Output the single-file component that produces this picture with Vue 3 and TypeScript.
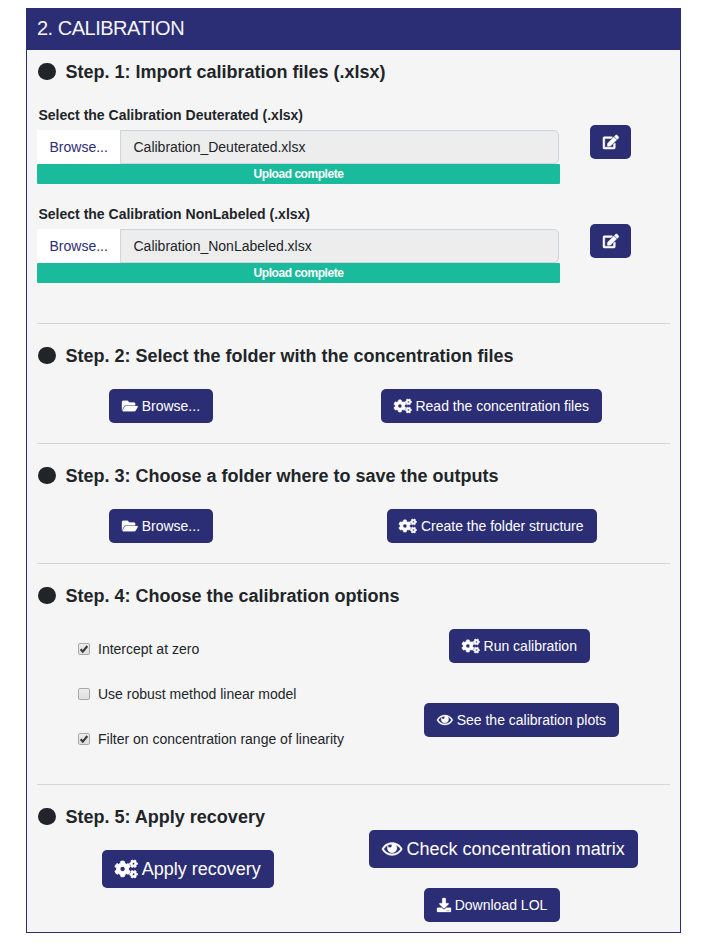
<script setup lang="ts">
import { ref, h, type FunctionalComponent } from 'vue'

type IconName = 'edit' | 'folder' | 'cogs' | 'eye' | 'download'

const smallCog =
  'M512.1 191l-8.2 14.3c-3 5.3-9.4 7.5-15.1 5.4-11.8-4.4-22.6-10.7-32.1-18.6-4.6-3.8-5.8-10.5-2.8-15.7l8.2-14.3c-6.9-8-12.3-17.3-15.9-27.4h-16.5c-6 0-11.2-4.3-12.2-10.3-2-12-2.1-24.6 0-37.1 1-6 6.2-10.4 12.2-10.4h16.5c3.6-10.1 9-19.4 15.9-27.4l-8.2-14.3c-3-5.2-1.9-11.9 2.8-15.7 9.5-7.9 20.4-14.2 32.1-18.6 5.7-2.1 12.1.1 15.1 5.4l8.2 14.3c10.5-1.9 21.2-1.9 31.7 0L552 6.3c3-5.3 9.4-7.5 15.1-5.4 11.8 4.4 22.6 10.7 32.1 18.6 4.6 3.8 5.8 10.5 2.8 15.7l-8.2 14.3c6.9 8 12.3 17.3 15.9 27.4h16.5c6 0 11.2 4.3 12.2 10.3 2 12 2.1 24.6 0 37.1-1 6-6.2 10.4-12.2 10.4h-16.5c-3.6 10.1-9 19.4-15.9 27.4l8.2 14.3c3 5.2 1.9 11.9-2.8 15.7-9.5 7.9-20.4 14.2-32.1 18.6-5.7 2.1-12.1-.1-15.1-5.4l-8.2-14.3c-10.4 1.9-21.2 1.9-31.7 0zm-10.5-58.8c38.5 29.6 82.4-14.3 52.8-52.8-38.5-29.7-82.4 14.3-52.8 52.8z'
const largeCog =
  'M386.3 286.1l33.7 16.8c10.1 5.8 14.5 18.1 10.5 29.1-8.9 24.2-26.4 46.4-42.6 65.8-7.4 8.9-20.2 11.1-30.3 5.3l-29.1-16.8c-16 13.7-34.6 24.6-54.9 31.7v33.6c0 11.6-8.3 21.6-19.7 23.6-24.6 4.2-50.4 4.4-75.9 0-11.5-2-20-11.9-20-23.6V418c-20.3-7.2-38.9-18-54.9-31.7L74 403c-10 5.8-22.9 3.6-30.3-5.3-16.2-19.4-33.3-41.6-42.2-65.7-4-10.9.4-23.2 10.5-29.1l33.3-16.8c-3.9-20.9-3.9-42.4 0-63.4L12 205.8c-10.1-5.8-14.6-18.1-10.5-29 8.9-24.2 26-46.4 42.2-65.8 7.4-8.9 20.2-11.1 30.3-5.3l29.1 16.8c16-13.7 34.6-24.6 54.9-31.7V57.1c0-11.5 8.2-21.5 19.6-23.5 24.6-4.2 50.5-4.4 76-.1 11.5 2 20 11.9 20 23.6v33.6c20.3 7.2 38.9 18 54.9 31.7l29.1-16.8c10-5.8 22.9-3.6 30.3 5.3 16.2 19.4 33.2 41.6 42.1 65.8 4 10.9.1 23.2-10 29.1l-33.7 16.8c3.9 21 3.9 42.5 0 63.5zm-117.6 21.1c59.2-77-28.7-164.9-105.7-105.7-59.2 77 28.7 164.9 105.7 105.7z'

const icons: Record<IconName, { width: number; stroke: number; paths: { d: string; shift?: number }[] }> = {
  edit: {
    width: 576,
    stroke: 18,
    paths: [{ d: 'M402.6 83.2l90.2 90.2c3.8 3.8 3.8 10 0 13.8L274.4 405.6l-92.8 10.3c-12.4 1.4-22.9-9.1-21.5-21.5l10.3-92.8L388.8 83.2c3.8-3.8 10-3.8 13.8 0zm162-22.9l-48.8-48.8c-15.2-15.2-39.9-15.2-55.2 0l-35.4 35.4c-3.8 3.8-3.8 10 0 13.8l90.2 90.2c3.8 3.8 10 3.8 13.8 0l35.4-35.4c15.2-15.3 15.2-40 0-55.2zM384 346.2V448H64V128h229.8c3.2 0 6.2-1.3 8.5-3.5l40-40c7.6-7.6 2.2-20.5-8.5-20.5H48C21.5 64 0 85.5 0 112v352c0 26.5 21.5 48 48 48h352c26.5 0 48-21.5 48-48V306.2c0-10.7-12.9-16-20.5-8.5l-40 40c-2.2 2.3-3.5 5.3-3.5 8.5z' }],
  },
  folder: {
    width: 576,
    stroke: 12,
    paths: [{ d: 'M572.694 292.093L500.27 416.248A63.997 63.997 0 0 1 444.989 448H45.025c-18.523 0-30.064-20.093-20.731-36.093l72.424-124.155A64 64 0 0 1 152 256h399.964c18.523 0 30.064 20.093 20.73 36.093zM152 224h328v-48c0-26.51-21.49-48-48-48H272l-64-64H48C21.49 64 0 85.49 0 112v278.046l69.077-118.418C86.214 242.25 117.989 224 152 224z' }],
  },
  cogs: {
    width: 640,
    stroke: 22,
    paths: [{ d: smallCog }, { d: largeCog }, { d: smallCog, shift: 298.9 }],
  },
  eye: {
    width: 576,
    stroke: 10,
    paths: [{ d: 'M569.354 231.631C512.969 135.949 407.81 72 288 72 168.14 72 63.004 135.994 6.646 231.631a47.999 47.999 0 0 0 0 48.739C63.031 376.051 168.19 440 288 440c119.86 0 224.996-63.994 281.354-159.631a47.997 47.997 0 0 0 0-48.738zM288 392c-102.556 0-192.091-54.701-240-136 44.157-74.933 123.677-127.27 216.162-135.007C273.958 131.078 280 144.83 280 160c0 30.928-25.072 56-56 56s-56-25.072-56-56l.001-.042C157.794 179.043 152 200.844 152 224c0 75.111 60.889 136 136 136s136-60.889 136-136c0-31.031-10.4-59.629-27.895-82.515C451.704 164.638 498.009 205.106 528 256c-47.908 81.299-137.444 136-240 136z' }],
  },
  download: {
    width: 512,
    stroke: 10,
    paths: [{ d: 'M216 0h80c13.3 0 24 10.7 24 24v168h87.7c17.8 0 26.7 21.5 14.1 34.1L269.7 378.3c-7.5 7.5-19.8 7.5-27.3 0L90.1 226.1c-12.6-12.6-3.7-34.1 14.1-34.1H192V24c0-13.3 10.7-24 24-24zm296 376v112c0 13.3-10.7 24-24 24H24c-13.3 0-24-10.7-24-24V376c0-13.3 10.7-24 24-24h146.7l49 49c20.1 20.1 52.5 20.1 72.6 0l49-49H488c13.3 0 24 10.7 24 24zm-124 88c0-11-9-20-20-20s-20 9-20 20 9 20 20 20 20-9 20-20zm64 0c0-11-9-20-20-20s-20 9-20 20 9 20 20 20 20-9 20-20z' }],
  },
}

const Icon: FunctionalComponent<{ name: IconName }> = (props) => {
  const icon = icons[props.name]
  return h(
    'svg',
    {
      viewBox: `0 0 ${icon.width} 512`,
      width: `${icon.width / 512}em`,
      height: '1em',
      fill: 'currentColor',
      stroke: 'currentColor',
      'stroke-width': icon.stroke,
      overflow: 'visible',
      'aria-hidden': 'true',
    },
    icon.paths.map((p) => h('path', { d: p.d, transform: p.shift ? `translate(0 ${p.shift})` : undefined })),
  )
}
Icon.props = ['name']

const uploads = [
  { label: 'Select the Calibration Deuterated (.xlsx)', file: 'Calibration_Deuterated.xlsx' },
  { label: 'Select the Calibration NonLabeled (.xlsx)', file: 'Calibration_NonLabeled.xlsx' },
]

const options = ref([
  { label: 'Intercept at zero', checked: true },
  { label: 'Use robust method linear model', checked: false },
  { label: 'Filter on concentration range of linearity', checked: true },
])
</script>

<template>
  <main class="panel">
    <header class="panel-header">2. CALIBRATION</header>

    <section class="step step-import">
      <h2 class="title"><span class="dot"></span>Step. 1: Import calibration files (.xlsx)</h2>
      <div v-for="u in uploads" :key="u.file" class="upload">
        <div class="upload-main">
          <div class="label">{{ u.label }}</div>
          <div class="file-row">
            <button class="file-browse">Browse...</button>
            <div class="file-name">{{ u.file }}</div>
          </div>
          <div class="progress">Upload complete</div>
        </div>
        <button class="btn btn-edit"><Icon name="edit" /></button>
      </div>
    </section>

    <section class="step step-row">
      <h2 class="title"><span class="dot"></span>Step. 2: Select the folder with the concentration files</h2>
      <div class="actions">
        <div class="cell"><button class="btn w-browse"><Icon name="folder" />Browse...</button></div>
        <div class="cell"><button class="btn w-read"><Icon name="cogs" />Read the concentration files</button></div>
      </div>
    </section>

    <section class="step step-row">
      <h2 class="title"><span class="dot"></span>Step. 3: Choose a folder where to save the outputs</h2>
      <div class="actions">
        <div class="cell"><button class="btn w-browse"><Icon name="folder" />Browse...</button></div>
        <div class="cell"><button class="btn w-create"><Icon name="cogs" />Create the folder structure</button></div>
      </div>
    </section>

    <section class="step step-options">
      <h2 class="title"><span class="dot"></span>Step. 4: Choose the calibration options</h2>
      <div class="options-body">
        <div class="options">
          <label v-for="o in options" :key="o.label" class="option">
            <input v-model="o.checked" type="checkbox" class="native" />
            <span class="box">
              <svg v-if="o.checked" viewBox="0 0 12 12" width="12" height="12"><path d="M2.6 6.3 4.8 8.6 9.3 3" fill="none" stroke="#3c3c3c" stroke-width="2.2" /></svg>
            </span>
            <span>{{ o.label }}</span>
          </label>
        </div>
        <div class="run-actions">
          <button class="btn w-run"><Icon name="cogs" />Run calibration</button>
          <button class="btn w-plots"><Icon name="eye" />See the calibration plots</button>
        </div>
      </div>
    </section>

    <section class="step step-recovery">
      <div class="recovery-left">
        <h2 class="title"><span class="dot"></span>Step. 5: Apply recovery</h2>
        <button class="btn btn-lg w-apply"><Icon name="cogs" />Apply recovery</button>
      </div>
      <div class="recovery-right">
        <button class="btn btn-lg w-check"><Icon name="eye" />Check concentration matrix</button>
        <button class="btn w-download"><Icon name="download" />Download LOL</button>
      </div>
    </section>
  </main>
</template>

<style>
body {
  margin: 0;
  background: #fff;
}
</style>

<style scoped>
* {
  box-sizing: border-box;
}
.panel {
  width: 655px;
  height: 925px;
  margin: 8px 0 0 26px;
  border: 1px solid #2c2e75;
  background: #f5f5f5;
  color: #212529;
  font-family: 'Liberation Sans', Arial, sans-serif;
  font-size: 14px;
  line-height: 20px;
  white-space: nowrap;
}
.panel-header {
  height: 41px;
  padding: 0 10px;
  background: #2c2e75;
  color: #f5f5f5;
  font-size: 20px;
  line-height: 39px;
  letter-spacing: -0.5px;
}
.step {
  margin: 0 10px;
  border-bottom: 1px solid #d6d6d6;
}
.step:last-child {
  border-bottom: 0;
}
.title {
  display: flex;
  align-items: center;
  gap: 10px;
  height: 24px;
  margin: 0;
  font-size: 18px;
  line-height: 24px;
  font-weight: 700;
}
.dot {
  width: 17.5px;
  height: 17.5px;
  margin: 0 0 1.5px 1px;
  border-radius: 50%;
  background: #212529;
}
.step-import {
  height: 274px;
  padding-top: 10px;
}
.upload {
  display: flex;
  gap: 30px;
  height: 99px;
  padding-top: 21px;
}
.upload-main {
  width: 523px;
}
.label {
  height: 25px;
  padding-left: 1.5px;
  font-weight: 700;
}
.file-row {
  display: flex;
  width: 522px;
  height: 34px;
}
.file-browse {
  width: 83px;
  padding: 0 0 0 12.5px;
  border: 0;
  background: #fff;
  color: #2c2e75;
  font: inherit;
  text-align: left;
}
.file-name {
  flex: 1;
  padding: 6px 12.5px;
  border: 1px solid #ced4da;
  border-radius: 0 5px 5px 0;
  background: #ededed;
}
.progress {
  height: 20px;
  border-radius: 1px;
  background: #1abb9c;
  color: #fff;
  font-size: 12px;
  font-weight: 700;
  letter-spacing: -0.46px;
  text-align: center;
}
.btn {
  display: flex;
  align-items: center;
  justify-content: center;
  gap: 4px;
  height: 34px;
  padding: 0;
  border: 0;
  border-radius: 5px;
  background: #2c2e75;
  color: #fff;
  font: inherit;
}
.btn svg {
  flex: none;
}
.btn-lg {
  height: 38px;
  font-size: 18px;
}
.btn-edit {
  width: 41px;
  margin-top: 20px;
}
.step-row {
  height: 120px;
  padding-top: 20px;
}
.actions {
  display: flex;
  padding-top: 21px;
}
.cell {
  display: flex;
  justify-content: center;
  width: 248px;
}
.cell + .cell {
  width: 385px;
  padding-left: 28px;
}
.w-browse { width: 104px; }
.w-read { width: 221px; }
.w-create { width: 210px; }
.w-run { width: 141px; }
.w-plots { width: 195px; }
.w-apply { width: 172px; }
.w-check { width: 269px; }
.w-download { width: 136px; }
.step-options {
  height: 221px;
  padding-top: 20px;
}
.options-body {
  display: flex;
}
.options {
  display: flex;
  flex-direction: column;
  gap: 25px;
  width: 387px;
  padding: 31px 0 0 41px;
}
.option {
  display: flex;
  align-items: center;
  gap: 8px;
  height: 20px;
}
.native {
  display: none;
}
.box {
  display: flex;
  align-items: center;
  justify-content: center;
  width: 12px;
  height: 12px;
  border: 1px solid #a9a9a9;
  border-radius: 2px;
  background: linear-gradient(#ededed, #dedede);
}
.box svg {
  flex: none;
}
.run-actions {
  display: flex;
  flex-direction: column;
  gap: 40px;
  padding-top: 21px;
}
.w-run {
  margin-left: 25px;
}
.step-recovery {
  display: flex;
  padding-top: 20px;
}
.recovery-left {
  width: 332px;
}
.w-apply {
  margin: 21px 0 0 65px;
}
.recovery-right {
  display: flex;
  flex-direction: column;
  gap: 20px;
  padding-top: 25px;
}
.w-download {
  margin-left: 55px;
}
</style>
